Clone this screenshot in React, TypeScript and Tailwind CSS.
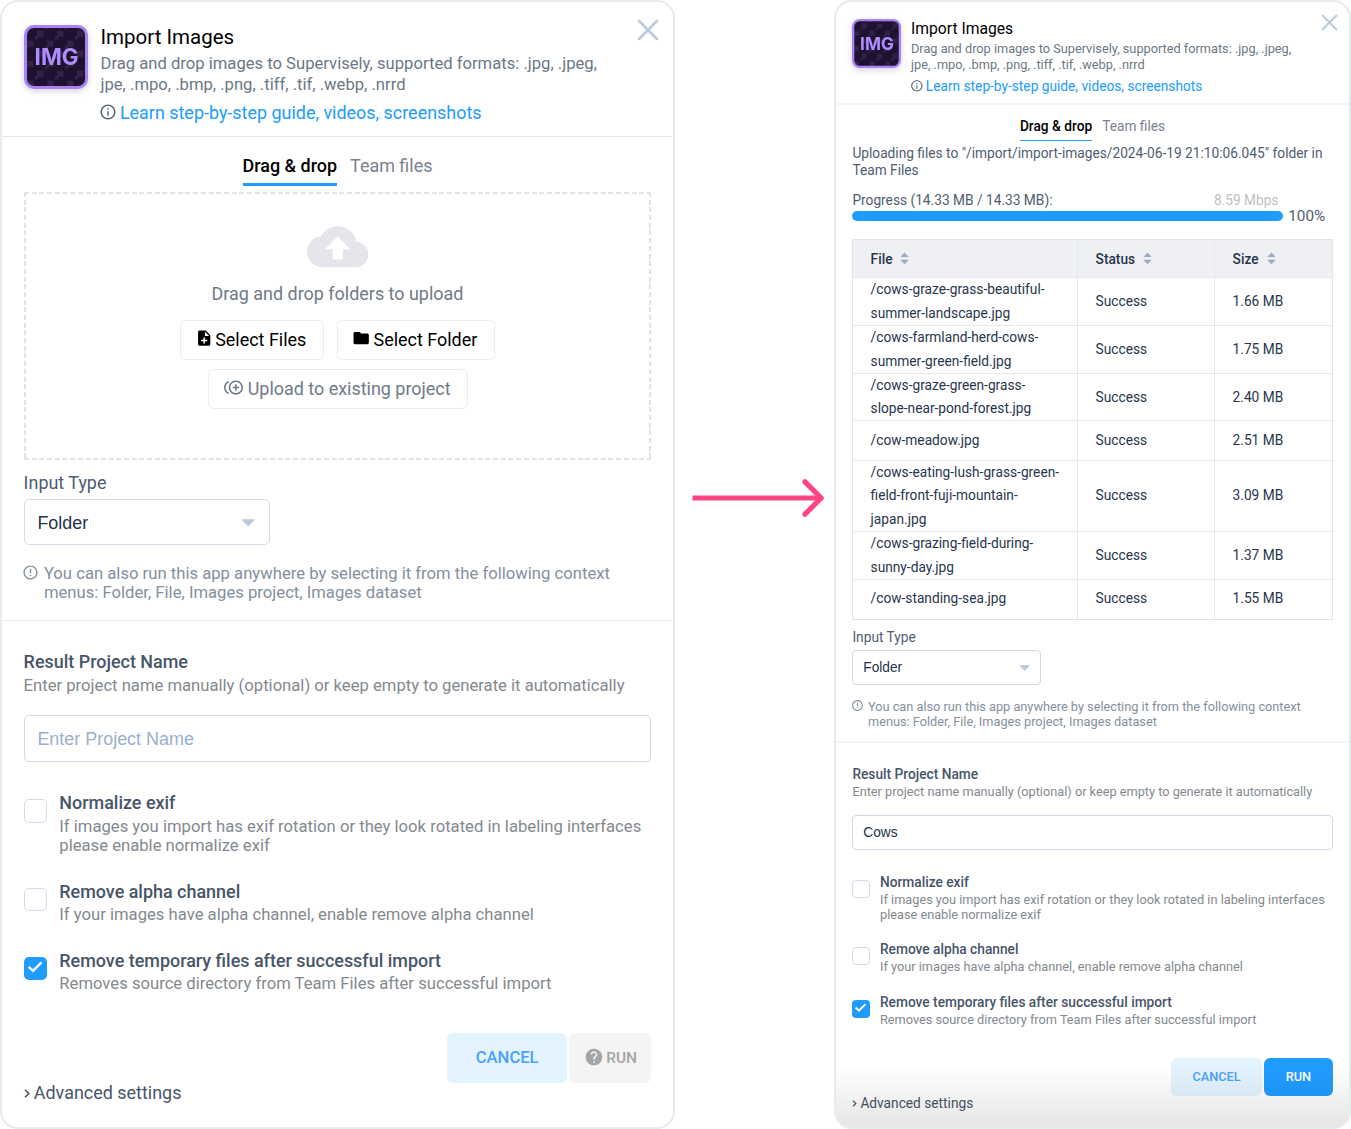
import React, { type ReactNode } from "react";
import {
  MdCloudUpload,
  MdControlPointDuplicate,
  MdErrorOutline,
  MdFolder,
  MdHelp,
  MdInfoOutline,
  MdNoteAdd,
} from "react-icons/md";

const ARROW = "M0 9 L6 3 M2 2 H7 V7";

function AppIcon({ className }: { className: string }) {
  return (
    <svg viewBox="0 0 64 64" className={`shrink-0 overflow-visible drop-shadow-[0_2px_3px_rgba(90,70,140,0.25)] ${className}`}>
      <defs>
        <pattern id="icon-arrows" width="20" height="20" patternUnits="userSpaceOnUse" patternTransform="translate(11 5)">
          <path d={ARROW} stroke="#33234c" strokeWidth="2.6" fill="none" />
          <path d={ARROW} stroke="#33234c" strokeWidth="2.6" fill="none" transform="translate(10 10)" />
        </pattern>
      </defs>
      <rect x="1.5" y="1.5" width="61" height="61" rx="8.5" fill="#1e1230" />
      <rect x="1.5" y="1.5" width="61" height="61" rx="8.5" fill="url(#icon-arrows)" stroke="#a982f6" strokeWidth="3" />
      <text x="32.6" y="40" textAnchor="middle" textLength="44" lengthAdjust="spacingAndGlyphs" className="fill-[#b18cfb] font-['Inter'] text-[22.5px] font-bold">
        IMG
      </text>
    </svg>
  );
}

function CloseIcon({ className }: { className: string }) {
  return (
    <svg viewBox="0 0 22 22" className={className} fill="none" stroke="#bccada" strokeWidth="2.6" strokeLinecap="round">
      <path d="M2 2 L20 20 M20 2 L2 20" />
    </svg>
  );
}

function Caret({ className }: { className: string }) {
  return (
    <svg viewBox="0 0 14 8" className={className} fill="#bccada" stroke="#bccada" strokeLinejoin="round">
      <path d="M1 .8 H13 L7 7 Z" />
    </svg>
  );
}

function Chevron({ className }: { className: string }) {
  return (
    <svg viewBox="0 0 6 9" className={className} fill="none" stroke="#475569" strokeWidth="1.6">
      <path d="M1 .8 L4.8 4.5 L1 8.2" />
    </svg>
  );
}

function SortIcon() {
  return (
    <svg viewBox="0 0 9 13" className="h-[13px] w-[9px]" fill="#9aabc2">
      <path d="M4.5 .5 L8.7 5 H.3 Z M4.5 12.3 L.3 7.8 H8.7 Z" />
    </svg>
  );
}

function Checkbox({ checked, className }: { checked?: boolean; className: string }) {
  return (
    <span
      className={`flex shrink-0 items-center justify-center ${
        checked ? "bg-[#209cff]" : "border border-[#d3dbe8] bg-white"
      } ${className}`}
    >
      {checked && (
        <svg viewBox="0 0 23 23" className="h-full w-full" fill="none" stroke="#fff" strokeWidth="2.4">
          <path d="M4.6 9.6 L8.8 13.6 L17.2 5.2" />
        </svg>
      )}
    </span>
  );
}

interface Option {
  title: string;
  lines: string[];
  checked?: boolean;
}

const OPTIONS: Option[] = [
  {
    title: "Normalize exif",
    lines: ["If images you import has exif rotation or they look rotated in labeling interfaces", "please enable normalize exif"],
  },
  { title: "Remove alpha channel", lines: ["If your images have alpha channel, enable remove alpha channel"] },
  {
    title: "Remove temporary files after successful import",
    lines: ["Removes source directory from Team Files after successful import"],
    checked: true,
  },
];

const FILES: { name: string[]; size: string }[] = [
  { name: ["/cows-graze-grass-beautiful-", "summer-landscape.jpg"], size: "1.66 MB" },
  { name: ["/cows-farmland-herd-cows-", "summer-green-field.jpg"], size: "1.75 MB" },
  { name: ["/cows-graze-green-grass-", "slope-near-pond-forest.jpg"], size: "2.40 MB" },
  { name: ["/cow-meadow.jpg"], size: "2.51 MB" },
  { name: ["/cows-eating-lush-grass-green-", "field-front-fuji-mountain-", "japan.jpg"], size: "3.09 MB" },
  { name: ["/cows-grazing-field-during-", "sunny-day.jpg"], size: "1.37 MB" },
  { name: ["/cow-standing-sea.jpg"], size: "1.55 MB" },
];

function Lines({ items }: { items: string[] }) {
  return (
    <>
      {items.map((line) => (
        <span key={line} className="block whitespace-nowrap">
          {line}
        </span>
      ))}
    </>
  );
}

const FORMATS = ["Drag and drop images to Supervisely, supported formats: .jpg, .jpeg,", "jpe, .mpo, .bmp, .png, .tiff, .tif, .webp, .nrrd"];
const HINT = ["You can also run this app anywhere by selecting it from the following context", "menus: Folder, File, Images project, Images dataset"];

function DashedBox({ children }: { children: ReactNode }) {
  return (
    <div
      className="mt-[6.6px] flex h-[267.4px] flex-col items-center bg-no-repeat pt-[23.4px] [background-image:repeating-linear-gradient(90deg,#e1e3ea_0_5px,transparent_5px_7.69px),repeating-linear-gradient(90deg,#e1e3ea_0_5px,transparent_5px_7.69px),repeating-linear-gradient(180deg,#e1e3ea_0_5px,transparent_5px_7.69px),repeating-linear-gradient(180deg,#e1e3ea_0_5px,transparent_5px_7.69px)] [background-position:0_0,0_100%,0_0,100%_0] [background-size:100%_2px,100%_2px,2px_100%,2px_100%]"
    >
      {children}
    </div>
  );
}

function SetupPanel() {
  return (
    <section className="relative h-[1129px] w-[675px] shrink-0 overflow-hidden rounded-[18px] border-2 border-[#e6ebf0] bg-white text-[17.95px] leading-6">
      <CloseIcon className="absolute top-[17px] right-[14.5px] size-[22px]" />
      <header className="flex h-[135px] border-b border-[#e6e8ef] pl-[21.6px]">
        <AppIcon className="mt-[23.3px] size-16" />
        <div className="ml-[12.9px]">
          <h1 className="mt-[21.7px] text-[20.5px] leading-[26px] text-black">Import Images</h1>
          <p className="mt-[3.2px] text-[16.64px] leading-[21.6px] text-[#6c7885]">
            <Lines items={FORMATS} />
          </p>
          <div className="mt-[5px] flex items-center">
            <MdInfoOutline className="-mt-[2px] -ml-px size-[18px] text-[#5c6878]" />
            <a className="ml-[2.4px] text-[#209cff]">Learn step-by-step guide, videos, screenshots</a>
          </div>
        </div>
      </header>

      <div className="pr-[21.6px] pl-[21.6px]">
        <nav className="mt-[16.7px] flex justify-center gap-[13px]">
          <span className="h-8 border-b-[3px] border-[#209cff] font-medium text-black">Drag &amp; drop</span>
          <span className="text-[#7b8190]">Team files</span>
        </nav>

        <DashedBox>
          <MdCloudUpload className="size-[61.4px] text-[#e4e6ec]" />
          <p className="mt-[4.9px] text-[#6f7a88]">Drag and drop folders to upload</p>
          <div className="mt-[14px] flex gap-[13px] text-black">
            <button className="flex h-10 w-[143.5px] items-center justify-center rounded-md border border-[#eaecf1] pr-[2.4px]">
              <MdNoteAdd className="-mt-[3px] mr-[2px] size-[18.4px]" />
              Select Files
            </button>
            <button className="flex h-10 w-[158.5px] items-center justify-center rounded-md border border-[#eaecf1] pr-[2px]">
              <MdFolder className="-mt-[3px] mr-[3px] size-[18.4px]" />
              Select Folder
            </button>
          </div>
          <button className="mt-[9px] flex h-10 w-[260px] items-center justify-center rounded-md border border-[#eaecf1] text-[#6f7a88]">
            <MdControlPointDuplicate className="-mt-[3px] mr-[4.3px] size-[19px]" />
            Upload to existing project
          </button>
        </DashedBox>

        <div className="mt-[11px] text-[#4f5d70]">Input Type</div>
        <div className="mt-[4.6px] flex h-[46px] w-[246.3px] items-center justify-between rounded-[5px] border border-[#d5dfe9] pt-px pr-[13.8px] pl-[12.8px] font-['Liberation_Sans'] text-[#24344a]">
          Folder
          <Caret className="h-2 w-[14.5px]" />
        </div>
        <div className="mt-[18.4px] flex text-[16.66px] leading-[19.3px] text-[#84909e]">
          <MdErrorOutline className="-ml-[1.3px] mr-[4.6px] size-[17px]" />
          <p>
            <Lines items={HINT} />
          </p>
        </div>
      </div>
      <div className="mt-[17.7px] h-px bg-[#e8ebf1]" />

      <div className="pr-[21.6px] pl-[21.6px]">
        <h2 className="mt-[29.5px] font-medium text-[#475569]">Result Project Name</h2>
        <p className="mt-[1.2px] text-[16.65px] leading-[19.3px] text-[#84898f]">
          Enter project name manually (optional) or keep empty to generate it automatically
        </p>
        <div className="mt-5 flex h-[46.7px] items-center rounded-[5px] border border-[#cfd9e5] pt-px pl-[12.8px] font-['Liberation_Sans'] text-[#9bb0cb]">
          Enter Project Name
        </div>

        <div className="mt-[29.7px] flex flex-col gap-[24.2px]">
          {OPTIONS.map((o) => (
            <div key={o.title} className="flex">
              <Checkbox checked={o.checked} className="mt-[8.2px] size-[23.5px] rounded-[5px]" />
              <div className="ml-[12.2px]">
                <div className="font-medium text-[#475569]">{o.title}</div>
                <p className="mt-[1.7px] text-[16.66px] leading-[19.2px] text-[#84898f]">
                  <Lines items={o.lines} />
                </p>
              </div>
            </div>
          ))}
        </div>

        <footer className="mt-[39.3px] flex h-[72.4px] justify-between">
          <div className="flex items-center self-end text-[#475569]">
            <Chevron className="mr-[4.2px] h-[9px] w-[6px]" />
            Advanced settings
          </div>
          <div className="flex h-[50.2px] gap-[2.5px] font-medium">
            <button className="w-[119.5px] rounded-md bg-[#e3f4fe] text-[16.64px] text-[#4aa0ff]">CANCEL</button>
            <button className="flex w-[82px] items-center justify-center gap-[2.5px] rounded-md bg-[#f4f4f4] text-[15.4px] text-[#a5a5a5]">
              <MdHelp className="-mt-[2px] size-[20px]" />
              RUN
            </button>
          </div>
        </footer>
      </div>
    </section>
  );
}

const ROW_HEIGHT: Record<number, string> = {
  1: "h-[39.1px]",
  2: "h-[47.7px]",
  3: "h-[71.4px]",
};

function TableRow({ cells, className }: { cells: ReactNode[]; className: string }) {
  return (
    <div role="row" className={`grid grid-cols-[225px_137px_1fr] border-b border-[#e5e9ef] last:border-b-0 ${className}`}>
      {cells.map((cell, i) => (
        <div key={i} role="cell" className="flex items-center border-r border-[#e5e9ef] pl-[17.2px] last:border-r-0">
          {cell}
        </div>
      ))}
    </div>
  );
}

function FileTable() {
  return (
    <div role="table" className="mt-[14.5px] border border-[#dfe5ec] text-[#27364b]">
      <TableRow
        className="h-[38.7px] bg-[#eff0f4] font-medium"
        cells={["File", "Status", "Size"].map((h) => (
          <span key={h} className="flex items-center gap-[8px]">
            {h}
            <SortIcon />
          </span>
        ))}
      />
      {FILES.map((f) => (
        <TableRow
          key={f.size}
          className={`leading-[23.6px] ${ROW_HEIGHT[f.name.length]}`}
          cells={[
            <div key="name">
              <Lines items={f.name} />
            </div>,
            "Success",
            f.size,
          ]}
        />
      ))}
    </div>
  );
}

function ProgressPanel() {
  return (
    <section className="relative h-[1129px] w-[517px] shrink-0 overflow-hidden rounded-[18px] border-2 border-[#e6ebf0] bg-white text-[13.72px] leading-5">
      <CloseIcon className="absolute top-[12.3px] right-[11px] size-[17px]" />
      <header className="flex h-[102.7px] border-b-2 border-[#f3f4f6] pl-[16.4px]">
        <AppIcon className="mt-[17.3px] size-[49px]" />
        <div className="ml-[9.6px]">
          <h1 className="mt-[16.6px] text-[15.68px] leading-5 text-black">Import Images</h1>
          <p className="mt-[2.4px] text-[12.74px] leading-[16.4px] text-[#6c7885]">
            <Lines items={FORMATS} />
          </p>
          <div className="mt-[2.3px] flex items-center">
            <MdInfoOutline className="-mt-px -ml-[.9px] size-[13.7px] text-[#5c6878]" />
            <a className="ml-[2px] text-[#209cff]">Learn step-by-step guide, videos, screenshots</a>
          </div>
        </div>
      </header>

      <div className="pr-[16.4px] pl-[16.4px]">
        <nav className="mt-[11.8px] flex justify-center gap-[10px]">
          <span className="h-[25px] border-b border-[#209cff] font-medium text-black">Drag &amp; drop</span>
          <span className="text-[#7b8190]">Team files</span>
        </nav>
        <p className="mt-[4px] leading-[16.2px] text-[#4f5d70]">
          <Lines items={['Uploading files to "/import/import-images/2024-06-19 21:10:06.045" folder in', "Team Files"]} />
        </p>
        <div className="mt-[14px] flex w-[426.2px] justify-between leading-4">
          <span className="text-[#4f5d70]">Progress (14.33 MB / 14.33 MB):</span>
          <span className="text-[#bfbfbf]">8.59 Mbps</span>
        </div>
        <div className="mt-[.3px] flex h-4 items-center">
          <div className="h-[10px] w-[430.8px] rounded-full bg-[#209cff]" />
          <span className="ml-[5px] text-[15.3px] text-[#4f5d70]">100%</span>
        </div>

        <FileTable />

        <div className="mt-[8.8px] leading-4 text-[#4f5d70]">Input Type</div>
        <div className="mt-[5.5px] flex h-[35px] w-[188.8px] items-center justify-between rounded-[4px] border border-[#d0dae6] pt-px pr-[9.8px] pl-[9.9px] font-['Liberation_Sans'] text-[#24344a]">
          Folder
          <Caret className="h-[6.2px] w-[11.2px]" />
        </div>
        <div className="mt-[13.8px] flex text-[12.74px] leading-[15px] text-[#84909e]">
          <MdErrorOutline className="-ml-px mr-[3.6px] size-[13px]" />
          <p>
            <Lines items={HINT} />
          </p>
        </div>
      </div>
      <div className="mt-[11.8px] h-[2px] bg-[#f3f4f6]" />

      <div className="pr-[16.4px] pl-[16.4px]">
        <h2 className="mt-[22.7px] leading-[18px] font-medium text-[#475569]">Result Project Name</h2>
        <p className="mt-[1.2px] text-[12.74px] leading-[15px] text-[#84898f]">
          Enter project name manually (optional) or keep empty to generate it automatically
        </p>
        <div className="mt-[15.1px] flex h-[35.7px] items-center rounded-[4px] border border-[#d0dae6] pt-px pl-[9.9px] font-['Liberation_Sans'] text-[#24344a]">
          Cows
        </div>

        <div className="mt-[22.4px] flex flex-col gap-[17.7px]">
          {OPTIONS.map((o) => (
            <div key={o.title} className="flex">
              <Checkbox checked={o.checked} className="mt-[7px] size-[18px] rounded-[4px]" />
              <div className="ml-[9.6px]">
                <div className="leading-[18px] font-medium text-[#475569]">{o.title}</div>
                <p className="mt-[2.2px] text-[12.74px] leading-[14.8px] text-[#84898f]">
                  <Lines items={o.lines} />
                </p>
              </div>
            </div>
          ))}
        </div>

        <footer className="mt-[30.3px] flex h-[54.3px] justify-between">
          <div className="flex items-center self-end leading-[18px] text-[#475569]">
            <Chevron className="mr-[3px] h-[7px] w-[5px]" />
            Advanced settings
          </div>
          <div className="flex h-[38.3px] gap-[2.3px] text-[12.74px] font-medium">
            <button className="w-[90.5px] rounded-md bg-[#e3f4fe] text-[#4aa0ff]">CANCEL</button>
            <button className="w-[68.5px] rounded-md bg-[#209cff] text-white">RUN</button>
          </div>
        </footer>
      </div>
      <div className="pointer-events-none absolute inset-x-0 bottom-0 h-[62px] bg-linear-to-b from-black/0 to-black/10" />
    </section>
  );
}

export default function App() {
  return (
    <main className="flex h-[1129px] w-[1351px] overflow-hidden bg-white font-['Roboto',sans-serif]">
      <SetupPanel />
      <div className="flex w-[159px] shrink-0 justify-center pt-[478px]">
        <svg viewBox="0 0 134 40" className="h-10 w-[134px] overflow-visible" fill="none" stroke="#ff4483" strokeWidth="5.2">
          <path d="M4.5 20 H131" />
          <path d="M117 3.8 L133.2 20 L117 36.2" strokeLinecap="round" strokeLinejoin="round" />
        </svg>
      </div>
      <ProgressPanel />
    </main>
  );
}
